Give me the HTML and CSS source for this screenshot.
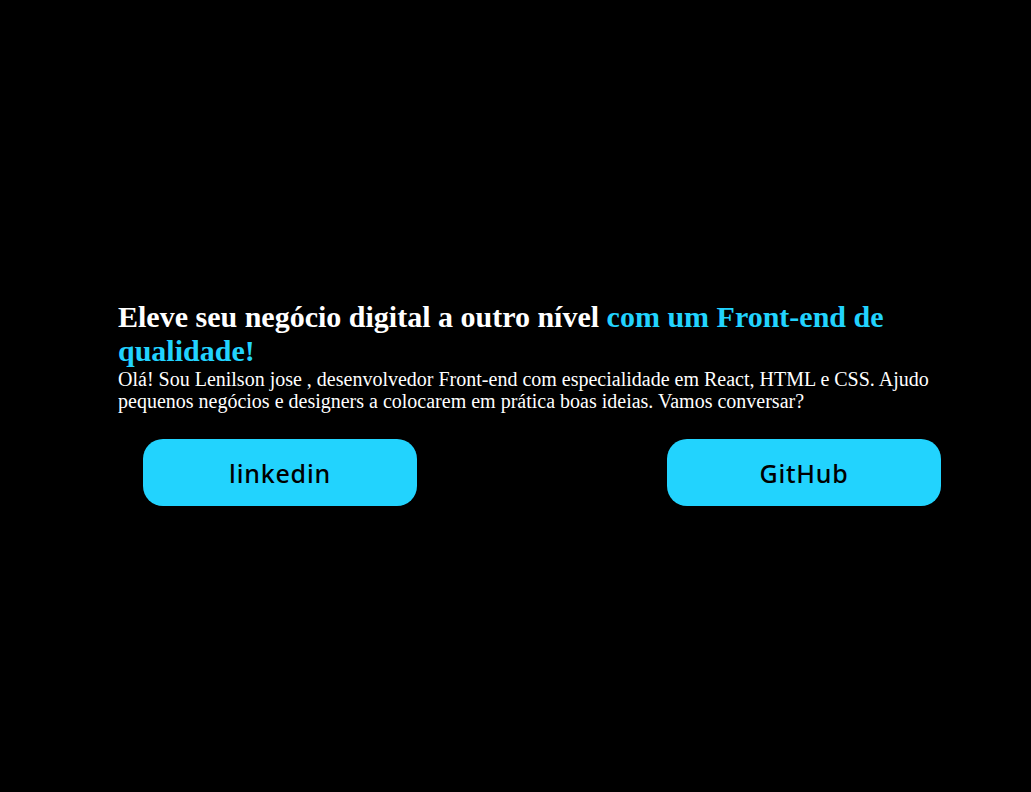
FILE: index.html
```html
<!DOCTYPE html>
<html lang="pt-BR">
<head>
<meta charset="utf-8">
<title>Lenilson jose</title>
<link rel="stylesheet" href="styles.css">
</head>
<body>
<main class="hero">
  <h1 class="title">Eleve seu negócio digital a outro nível <span class="accent">com um Front-end de qualidade!</span></h1>
  <p class="intro">Olá! Sou Lenilson jose , desenvolvedor Front-end com especialidade em React, HTML e CSS. Ajudo pequenos negócios e designers a colocarem em prática boas ideias. Vamos conversar?</p>
  <div class="actions">
    <a class="btn" href="#">linkedin</a>
    <a class="btn" href="#">GitHub</a>
  </div>
</main>
</body>
</html>
```
FILE: styles.css
```css
html, body {
  margin: 0;
  background: #000;
}
body {
  min-height: 792px;
  font-family: "Liberation Serif", "Times New Roman", serif;
  color: #fff;
}
.hero {
  padding-top: 300px;
  padding-left: 118px;
  width: 848px;
}
.title {
  margin: 0;
  font-size: 30px;
  font-weight: bold;
  line-height: normal;
  width: 830px;
}
.accent {
  color: #22d3fe;
}
.intro {
  margin: 0;
  font-size: 20px;
  line-height: 22px;
  width: 830px;
}
.actions {
  display: flex;
  justify-content: space-between;
  padding: 0 25px;
  margin-top: 27px;
}
.btn {
  display: flex;
  align-items: center;
  justify-content: center;
  width: 274px;
  height: 67px;
  border-radius: 20px;
  background: #22d3fe;
  color: #000;
  text-decoration: none;
  font-family: "Noto Sans", sans-serif;
  font-weight: 500;
  font-size: 25px;
  letter-spacing: 0.8px;
}
```
